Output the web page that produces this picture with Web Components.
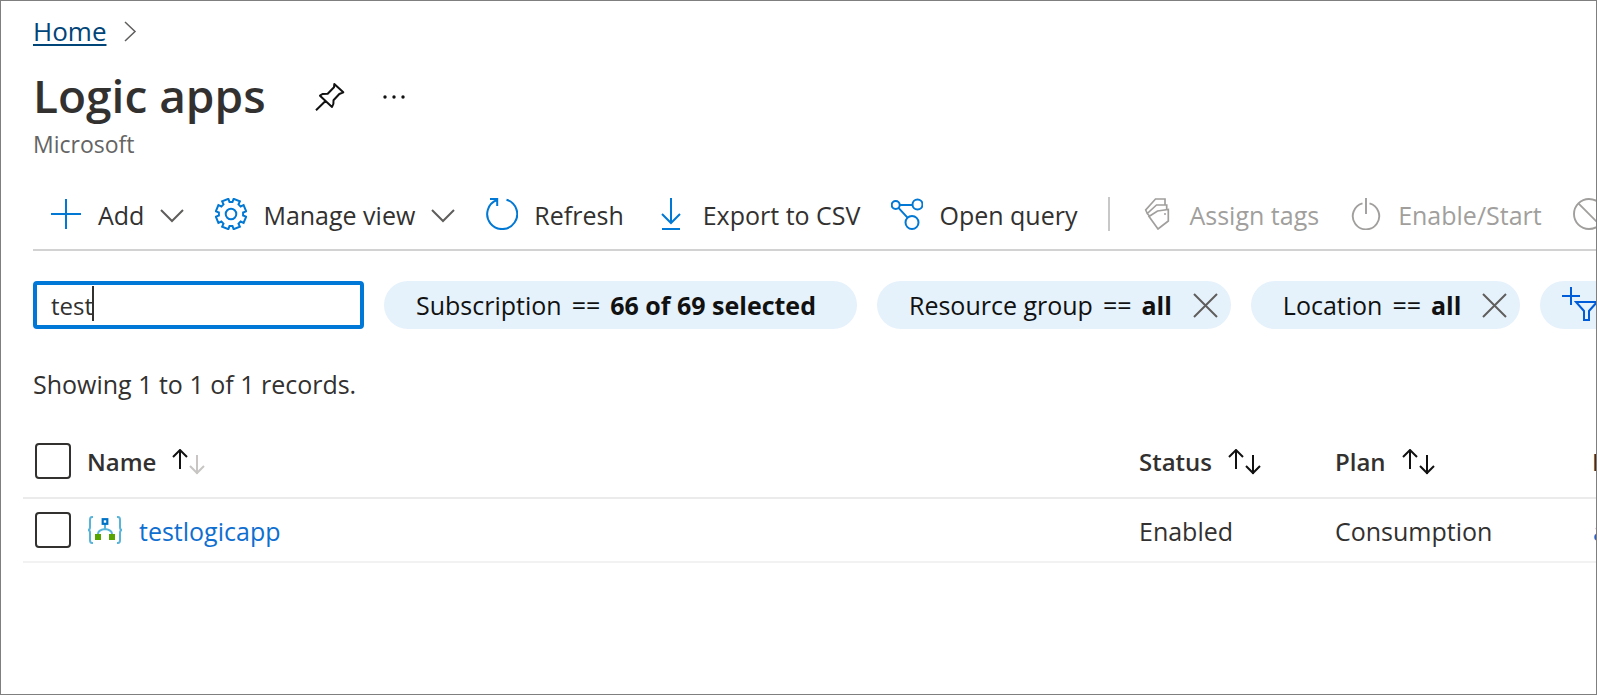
<!DOCTYPE html>
<html lang="en">
<head>
<meta charset="utf-8">
<title>Logic apps</title>
<style>
  body { margin: 0; background: #fff; color: #323130; font: 400 25px/32px "Open Sans", "Noto Sans", sans-serif; }
</style>
</head>
<body>
<portal-page>
  <portal-breadcrumb href="#home">Home</portal-breadcrumb>
  <blade-header subtitle="Microsoft">Logic apps</blade-header>
  <command-bar>
    <command-item icon="add" menu>Add</command-item>
    <command-item icon="gear" menu>Manage view</command-item>
    <command-item icon="refresh">Refresh</command-item>
    <command-item icon="download">Export to CSV</command-item>
    <command-item icon="query">Open query</command-item>
    <command-divider></command-divider>
    <command-item icon="tags" disabled>Assign tags</command-item>
    <command-item icon="power" disabled>Enable/Start</command-item>
    <command-item icon="block" disabled></command-item>
  </command-bar>
  <filter-bar>
    <filter-box value="test"></filter-box>
    <filter-pill name="Subscription">66 of 69 selected</filter-pill>
    <filter-pill name="Resource group" removable>all</filter-pill>
    <filter-pill name="Location" removable>all</filter-pill>
    <add-filter></add-filter>
  </filter-bar>
  <record-count>Showing 1 to 1 of 1 records.</record-count>
  <resource-grid></resource-grid>
</portal-page>

<script>
function gearPath() {
  const teeth = 8, step = 2 * Math.PI / teeth, pts = [];
  const at = (a, r) => (16 + r * Math.sin(a)).toFixed(2) + ' ' + (16 - r * Math.cos(a)).toFixed(2);
  for (let i = 0; i < teeth; i++) {
    const c = (i + 0.5) * step;
    pts.push(at(c - 0.27, 12.2), at(c - 0.22, 15.4), at(c + 0.22, 15.4), at(c + 0.27, 12.2));
  }
  return 'M' + pts.join('L') + 'Z';
}

const ICONS = {
  chevronRight: '<path d="M1 1L11 10.500L1 20"/>',
  chevronDown: '<path d="M1 1L12 12L23 1"/>',
  close: '<path d="M1 1L24 24M24 1L1 24"/>',
  pin: '<path stroke-linejoin="round" d="M20.3 3L29.3 11.300L25.300 13L19.500 19.300Q20 23 18 26L6 14.700L8.500 13L13.700 12.700L20 6.300ZM11.500 20L2 29.300"/>',
  more: '<g fill="currentColor" stroke="none"><circle cx="7" cy="16" r="1.700"/><circle cx="16" cy="16" r="1.700"/><circle cx="25" cy="16" r="1.700"/></g>',
  add: '<path d="M16 1V31M1 16H31"/>',
  gear: '<path d="' + gearPath() + '"/><circle cx="16" cy="16" r="5.300"/>',
  refresh: '<path d="M20.500 1.700A15 15 0 1 1 11 2M4 1H11.200V8"/>',
  download: '<path d="M16 0V25M7 16L16 25L25 16M7 31H25"/>',
  query: '<circle cx="4.700" cy="7" r="4"/><circle cx="26.500" cy="6.500" r="5"/><circle cx="21" cy="24.500" r="6.500"/><path d="M8.700 7H21.500M7.500 9.800L16.500 19.700"/>',
  tags: '<path stroke-width="1.700" d="M16.500 13L27.300 11.500V23L17 31L8 18.500ZM8.500 18L6.300 15.500L15.500 7H25.700V11.500M6.300 15.500L4.700 12L14.500 1H24V7"/><circle cx="24" cy="16" r="1" fill="currentColor" stroke="none"/>',
  power: '<path stroke-width="1.900" d="M12.500 5.400A13.200 13.200 0 1 0 19.500 5.400M16 0V16"/>',
  block: '<circle cx="16" cy="16" r="15" stroke-width="1.900"/><path stroke-width="1.900" d="M5.400 5.400L26.600 26.600"/>',
  funnel: '<path d="M9 0V18M0 9H18M14 15H35L27 24V33H22V24Z"/>',
  sort: '<path d="M8 20V1M1 8L8 1L15 8"/><path class="down" d="M25 6V25M18 17L25 24L32 17"/>',
  logic: '<g stroke="#59b4d9" stroke-width="2"><path d="M6 1H5Q3 1 3 4V11Q3 14 1 14Q3 14 3 17V24Q3 27 5 27H6"/><path d="M30 1H31Q33 1 33 4V11Q33 14 35 14Q33 14 33 17V24Q33 27 31 27H30"/><path d="M18 8V13M11 18Q11 14 18 13Q25 14 25 18"/></g><rect x="15.700" y="3.200" width="4.600" height="4.600" stroke="#0072c6" stroke-width="2.200"/><g fill="#57a300" stroke="none"><rect x="8" y="18" width="6" height="6"/><rect x="22" y="18" width="6" height="6"/></g>'
};

function icon(name, w, h, color) {
  return `<svg class="icon" aria-hidden="true" width="${w}" height="${h}" viewBox="0 0 ${w} ${h}" fill="none" stroke="currentColor" stroke-width="2" style="color:${color}">${ICONS[name]}</svg>`;
}

const BASE = `
  * { box-sizing: border-box; }
  button { appearance: none; border: 0; background: none; padding: 0; margin: 0; font: inherit; color: inherit; }
  .icon { display: block; flex: none; }
`;

function define(tag, render) {
  customElements.define(tag, class extends HTMLElement {
    constructor() {
      super();
      this.attachShadow({ mode: 'open' });
    }
    connectedCallback() {
      this.shadowRoot.innerHTML = '<style>' + BASE + '</style>' + render(this);
    }
  });
}

define('portal-page', () => `
  <style>
    :host { display: block; box-sizing: border-box; min-height: 100vh; border: 1px solid #7f7f7f; padding: 12px 0 0 32px; overflow: hidden; }
  </style>
  <slot></slot>`);

define('portal-breadcrumb', el => `
  <style>
    :host { display: block; }
    nav { display: flex; align-items: center; gap: 18px; font-size: 26px; line-height: 36px; }
    a { color: #004578; text-decoration: underline; text-decoration-thickness: 2px; text-underline-offset: 3px; }
  </style>
  <nav aria-label="Breadcrumb"><a href="${el.getAttribute('href')}"><slot></slot></a>${icon('chevronRight', 13, 21, '#605e5c').replace('stroke-width="2"', 'stroke-width="1.500"')}</nav>`);

define('blade-header', el => `
  <style>
    :host { display: block; margin-top: 14px; }
    .row { display: flex; align-items: center; }
    h1 { margin: 0 48px 0 0; font-size: 46px; line-height: 64px; font-weight: 600; }
    button { padding-top: 4px; }
    button + button { margin-left: 32px; }
    p { margin: 1px 0 0; font-size: 23px; color: #646464; }
  </style>
  <div class="row">
    <h1><slot></slot></h1>
    <button aria-label="Pin">${icon('pin', 32, 32, '#111')}</button>
    <button aria-label="More">${icon('more', 32, 32, '#111')}</button>
  </div>
  <p>${el.getAttribute('subtitle')}</p>`);

define('command-bar', () => `
  <style>
    :host { display: block; margin-top: 18px; border-bottom: 2px solid #d2d2d2; overflow: hidden; }
    div { display: flex; align-items: center; gap: 31px; height: 71px; padding-left: 17px; }
  </style>
  <div role="toolbar" aria-label="Commands"><slot></slot></div>`);

define('command-divider', () => `
  <style>:host { display: block; flex: none; width: 2px; height: 34px; background: #c8c8c8; }</style>`);

define('command-item', el => {
  const off = el.hasAttribute('disabled');
  return `
  <style>
    :host { display: block; flex: none; }
    button { display: flex; align-items: center; gap: 16px; white-space: nowrap; color: ${off ? '#a19f9d' : '#323130'}; }
    .label { padding-top: 2px; }
    .label:empty { display: none; }
    .label ~ .icon { margin-top: 4px; }
  </style>
  <button ${off ? 'disabled' : ''} aria-label="${el.textContent || 'Disable'}">
    ${icon(el.getAttribute('icon'), 32, 32, off ? '#a19f9d' : '#0078d4')}<span class="label"><slot></slot></span>${el.hasAttribute('menu') ? icon('chevronDown', 24, 14, '#605e5c') : ''}
  </button>`;
});

define('filter-bar', () => `
  <style>
    :host { display: flex; gap: 20px; margin-top: 30px; overflow: hidden; }
  </style>
  <slot></slot>`);

define('filter-box', el => `
  <style>
    :host { display: block; position: relative; flex: 0 0 331px; }
    input { display: block; width: 100%; height: 48px; border: 4px solid #0078d7; border-radius: 4px; padding: 0 14px; font: inherit; font-size: 24px; color: #323130; background: #fff; outline: 0; }
    .caret { position: absolute; left: 59px; top: 5px; width: 2px; height: 35px; background: #323130; }
  </style>
  <input type="text" aria-label="Filter for any field" value="${el.getAttribute('value')}"><span class="caret"></span>`);

define('filter-pill', el => `
  <style>
    :host { display: flex; align-items: center; flex: none; height: 48px; border-radius: 24px; background: #e5f1fb; color: #111; white-space: nowrap; padding: 0 ${el.hasAttribute('removable') ? 13 : 41}px 0 32px; }
    .main { display: flex; gap: 10px; }
    b { font-weight: 700; }
    .remove { margin-left: 21px; }
  </style>
  <button class="main"><span>${el.getAttribute('name')}</span><span>==</span><b><slot></slot></b></button>
  ${el.hasAttribute('removable') ? `<button class="remove" aria-label="Remove filter">${icon('close', 25, 25, '#605e5c')}</button>` : ''}`);

define('add-filter', () => `
  <style>
    :host { display: block; flex: none; }
    button { display: flex; align-items: center; height: 48px; padding: 0 22px; border-radius: 24px; background: #e5f1fb; }
  </style>
  <button aria-label="Add filter">${icon('funnel', 36, 36, '#015cda')}</button>`);

define('record-count', () => `
  <style>:host { display: block; margin-top: 39px; }</style>
  <slot></slot>`);

define('sort-arrows', el => `
  <style>
    :host { display: block; flex: none; }
    button { display: block; }
    .down { stroke: ${el.hasAttribute('ascending') ? '#c8c6c4' : '#111'}; }
  </style>
  <button aria-label="Sort">${icon('sort', 33, 26, '#111')}</button>`);

define('check-box', el => `
  <style>
    :host { display: block; }
    input { appearance: none; display: block; width: 36px; height: 36px; margin: 0; border: 2px solid #323130; border-radius: 4px; background: #fff; }
    input:checked { background: #0078d4; }
  </style>
  <input type="checkbox" aria-label="${el.getAttribute('label')}">`);

define('resource-grid', () => `
  <style>
    :host { display: block; margin: 25px 0 0 -10px; overflow: hidden; }
    table { width: calc(100% + 196px); table-layout: fixed; border-collapse: separate; border-spacing: 0; }
    th, td { padding: 2px 0 0; text-align: left; vertical-align: middle; white-space: nowrap; font-weight: 400; }
    th { height: 74px; font-weight: 600; font-size: 24px; border-bottom: 2px solid #ebebeb; }
    td { height: 64px; border-bottom: 2px solid #f2f2f2; }
    th:first-child, td:first-child { padding: 0 0 0 12px; }
    .pick { width: 64px; }
    .status { width: 196px; }
    .plan { width: 257px; }
    .group { width: 200px; }
    .cell { display: flex; align-items: center; gap: 16px; }
    td .cell .icon { margin-bottom: 2px; }
    a { color: #0f6fd0; text-decoration: none; }
    td:last-child { padding-left: 1px; }
  </style>
  <table>
    <thead>
      <tr>
        <th class="pick" scope="col"><check-box label="Select all"></check-box></th>
        <th scope="col"><div class="cell">Name<sort-arrows ascending></sort-arrows></div></th>
        <th class="status" scope="col"><div class="cell">Status<sort-arrows></sort-arrows></div></th>
        <th class="plan" scope="col"><div class="cell">Plan<sort-arrows></sort-arrows></div></th>
        <th class="group" scope="col">R</th>
      </tr>
    </thead>
    <tbody>
      <tr>
        <td><check-box label="Select testlogicapp"></check-box></td>
        <td><div class="cell">${icon('logic', 36, 28, '#59b4d9')}<a href="#testlogicapp">testlogicapp</a></div></td>
        <td>Enabled</td>
        <td>Consumption</td>
        <td><a href="#group">a</a></td>
      </tr>
    </tbody>
  </table>`);
</script>
</body>
</html>
